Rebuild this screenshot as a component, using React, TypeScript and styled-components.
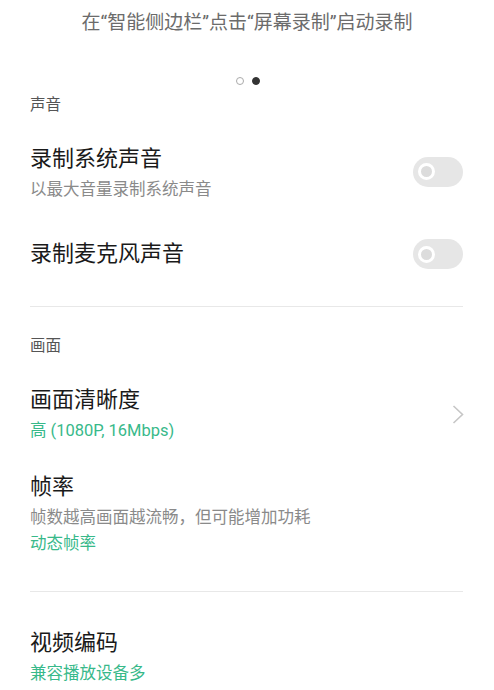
import React from 'react'
import styled, { createGlobalStyle } from 'styled-components'

const GlobalStyle = createGlobalStyle`
  html, body {
    margin: 0;
    padding: 0;
    background: #ffffff;
  }
  body {
    font-family: Roboto, "Noto Sans CJK SC", sans-serif;
    -webkit-font-smoothing: antialiased;
  }
`

const Page = styled.div`
  width: 494px;
  height: 690px;
  overflow: hidden;
  box-sizing: border-box;
  padding: 0 31px 0 30px;
  display: flex;
  flex-direction: column;
`

const Hint = styled.div`
  padding-top: 11px;
  font-size: 19px;
  line-height: 24px;
  color: #6b6b6b;
  text-align: center;
  margin: 0 -31px 0 -30px;
`

const Pager = styled.div`
  margin-top: 42px;
  display: flex;
  justify-content: center;
  gap: 8px;
  padding-left: 2px;
`

const Dot = styled.span<{ $active?: boolean }>`
  width: 8px;
  height: 8px;
  box-sizing: border-box;
  border-radius: 50%;
  border: 1px solid ${p => (p.$active ? '#333' : '#aaa')};
  background: ${p => (p.$active ? '#333' : 'transparent')};
`

const SectionLabel = styled.div<{ $top: number }>`
  margin-top: ${p => p.$top}px;
  font-size: 15.5px;
  line-height: 20px;
  color: #555;
`

const Row = styled.div<{ $top: number }>`
  margin-top: ${p => p.$top}px;
  display: flex;
  align-items: center;
  justify-content: space-between;
`

const TextBlock = styled.div`
  display: flex;
  flex-direction: column;
`

const Title = styled.div`
  font-size: 22px;
  line-height: 30px;
  color: #1a1a1a;
`

const Sub = styled.div<{ $accent?: boolean }>`
  font-size: 16.5px;
  line-height: 26px;
  color: ${p => (p.$accent ? '#38b98a' : '#8a8a8a')};
  ${Title} + & {
    margin-top: 3px;
  }
`

const Track = styled.div<{ $shift?: number }>`
  width: 50px;
  height: 30px;
  border-radius: 15px;
  background: #e6e6e6;
  display: flex;
  align-items: center;
  padding-left: 5px;
  box-sizing: border-box;
  flex-shrink: 0;
  margin-top: ${p => -(p.$shift ?? 0) * 2}px;
`

const Knob = styled.span`
  width: 17px;
  height: 17px;
  box-sizing: border-box;
  border-radius: 50%;
  border: 3px solid #ffffff;
  background: #dcdcdc;
`

const Divider = styled.div<{ $top: number }>`
  margin-top: ${p => p.$top}px;
  height: 1px;
  background: #e8e8e8;
`

const Chevron = () => (
  <svg width="12" height="19" viewBox="0 0 12 19" style={{ flexShrink: 0, marginRight: -1 }}>
    <polyline points="1.5,1 10.5,9.5 1.5,18" fill="none" stroke="#c6c6c6" strokeWidth="1.6" />
  </svg>
)

const Toggle = ({ shift }: { shift?: number }) => (
  <Track $shift={shift}>
    <Knob />
  </Track>
)

export default function App() {
  return (
    <>
      <GlobalStyle />
      <Page>
        <Hint>在“智能侧边栏”点击“屏幕录制”启动录制</Hint>
        <Pager>
          <Dot />
          <Dot $active />
        </Pager>

        <SectionLabel $top={10}>声音</SectionLabel>
        <Row $top={29}>
          <TextBlock>
            <Title>录制系统声音</Title>
            <Sub>以最大音量录制系统声音</Sub>
          </TextBlock>
          <Toggle shift={2} />
        </Row>
        <Row $top={36}>
          <TextBlock>
            <Title>录制麦克风声音</Title>
          </TextBlock>
          <Toggle />
        </Row>

        <Divider $top={37} />

        <SectionLabel $top={29}>画面</SectionLabel>
        <Row $top={29}>
          <TextBlock>
            <Title>画面清晰度</Title>
            <Sub $accent>高 (1080P, 16Mbps)</Sub>
          </TextBlock>
          <Chevron />
        </Row>
        <Row $top={28}>
          <TextBlock>
            <Title>帧率</Title>
            <Sub>帧数越高画面越流畅，但可能增加功耗</Sub>
            <Sub $accent>动态帧率</Sub>
          </TextBlock>
        </Row>

        <Divider $top={34} />

        <Row $top={36}>
          <TextBlock>
            <Title>视频编码</Title>
            <Sub $accent>兼容播放设备多</Sub>
          </TextBlock>
        </Row>
      </Page>
    </>
  )
}
